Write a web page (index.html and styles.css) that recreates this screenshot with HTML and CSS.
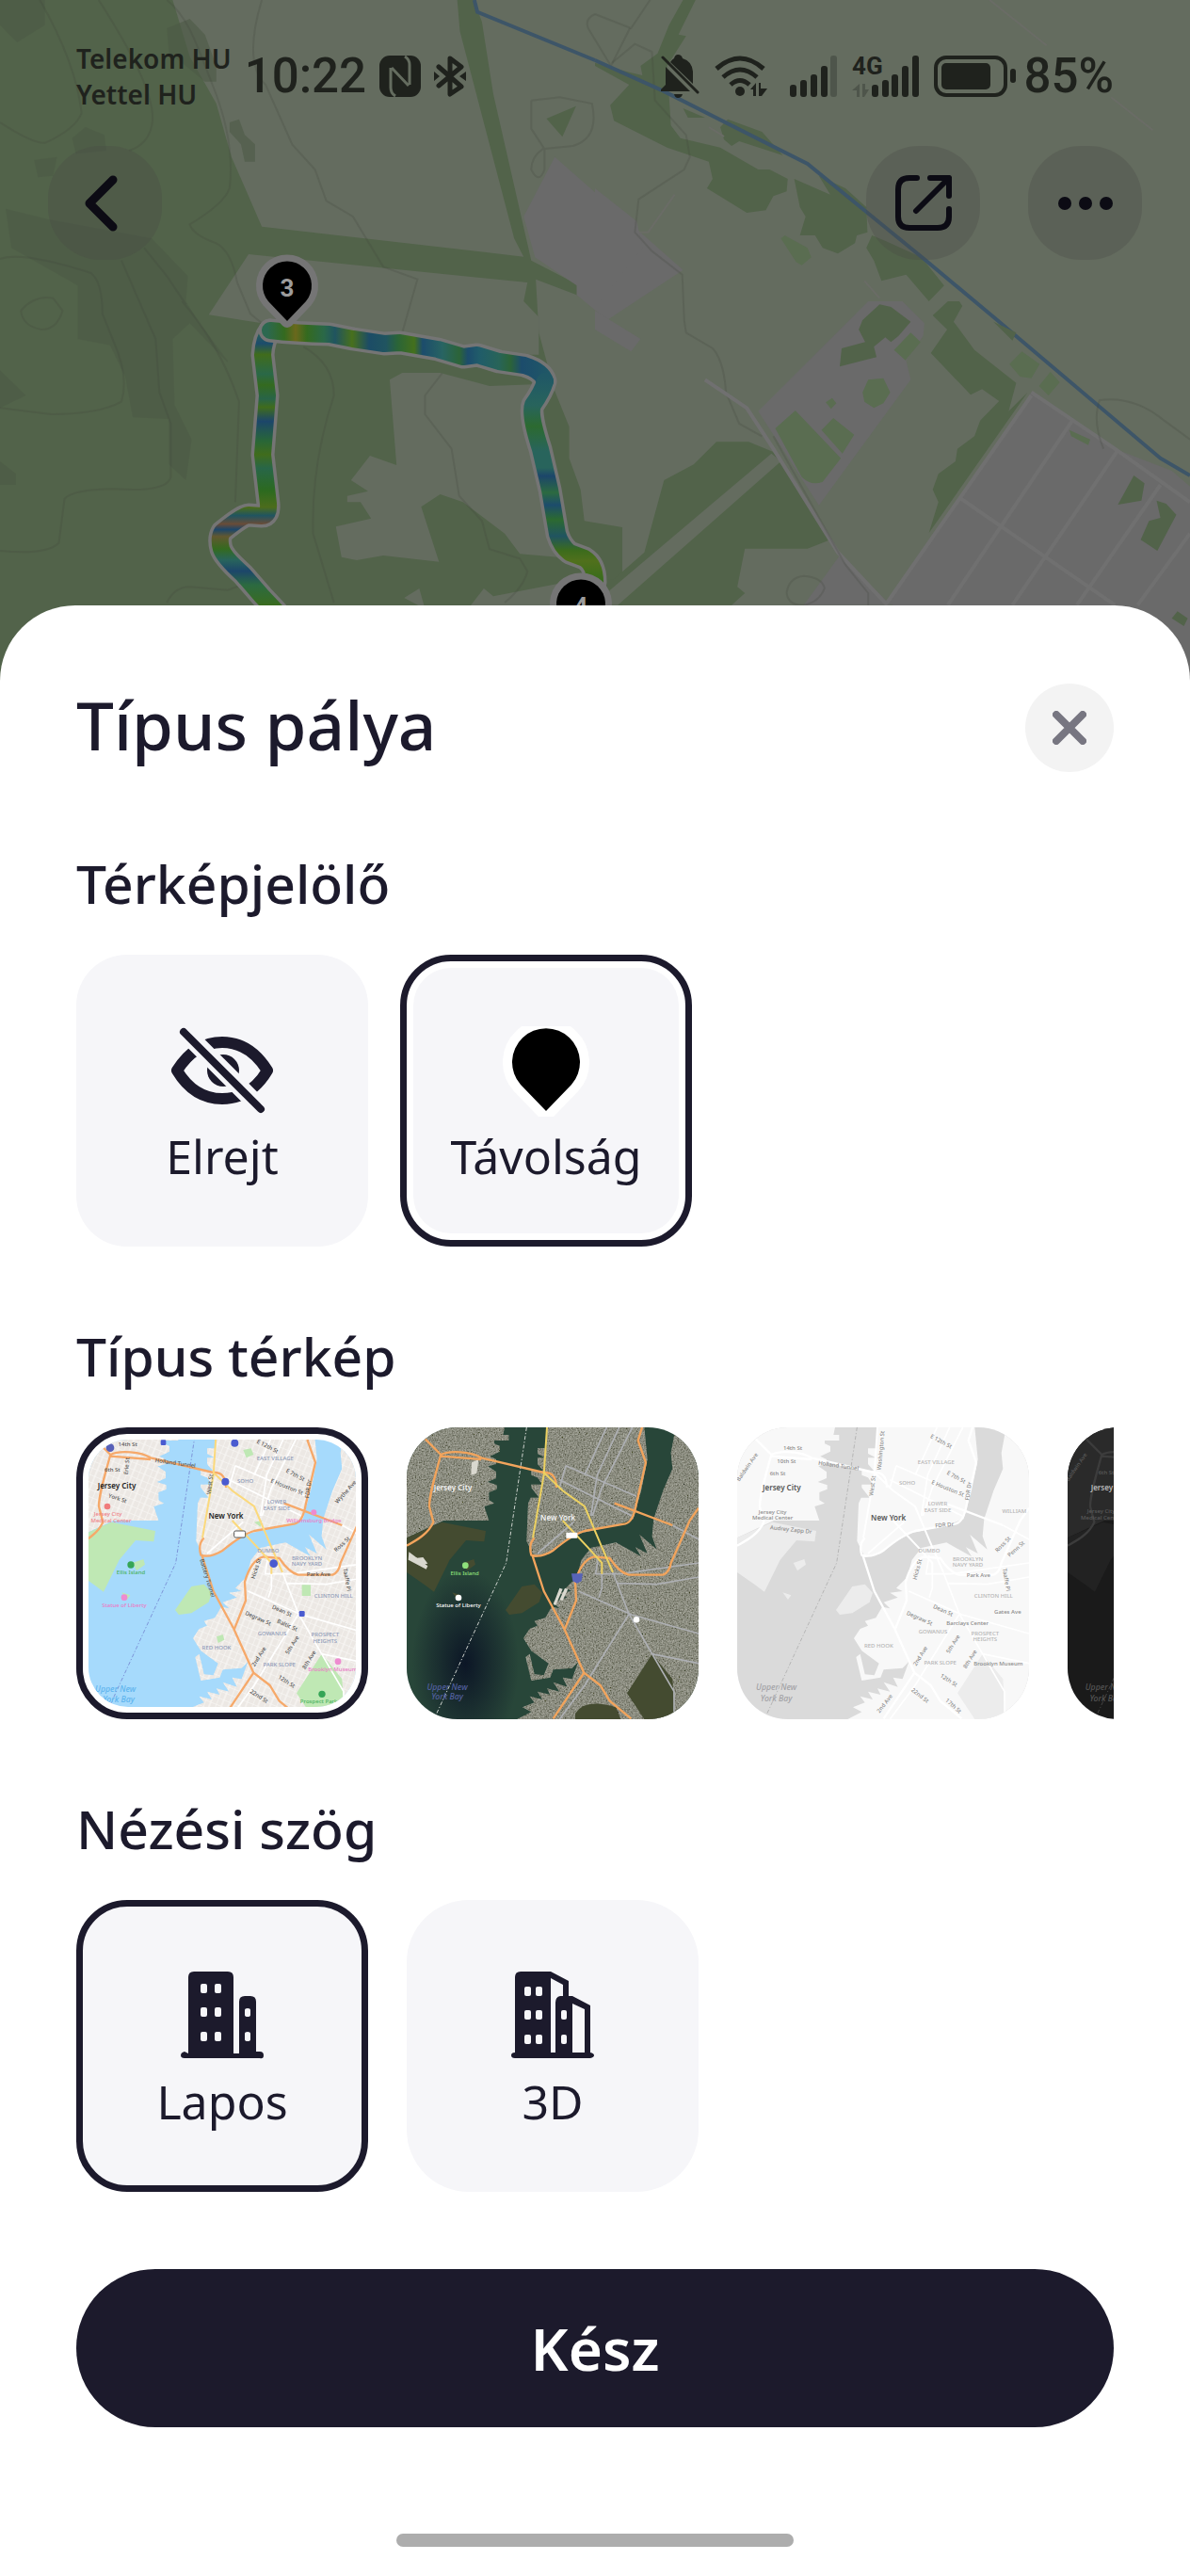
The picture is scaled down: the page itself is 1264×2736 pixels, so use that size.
FILE: index.html
```html
<!DOCTYPE html>
<html lang="hu">
<head>
<meta charset="utf-8">
<meta name="viewport" content="width=device-width, initial-scale=1">
<title>Típus pálya</title>
<link rel="stylesheet" href="styles.css">
</head>
<body>
<div class="screen">
  <svg class="terrain" viewBox="0 0 1264 740" preserveAspectRatio="xMidYMin slice" aria-hidden="true">
    <defs>
      <linearGradient id="routeNorth" gradientUnits="userSpaceOnUse" x1="284" y1="0" x2="584" y2="0">
        <stop offset="0" stop-color="#2c6850"/><stop offset=".06" stop-color="#346a1f"/><stop offset=".1" stop-color="#6a681c"/><stop offset=".14" stop-color="#346a1f"/><stop offset=".2" stop-color="#2a6848"/><stop offset=".24" stop-color="#205460"/><stop offset=".3" stop-color="#48701c"/><stop offset=".36" stop-color="#1c4c66"/><stop offset=".42" stop-color="#205460"/><stop offset=".46" stop-color="#2a6438"/><stop offset=".52" stop-color="#44701c"/><stop offset=".55" stop-color="#1c4c6c"/><stop offset=".62" stop-color="#286462"/><stop offset=".68" stop-color="#2c6438"/><stop offset=".71" stop-color="#1c4c6c"/><stop offset=".75" stop-color="#205c6a"/><stop offset=".82" stop-color="#286458"/><stop offset=".86" stop-color="#2c6438"/><stop offset=".9" stop-color="#1c4c6c"/><stop offset="1" stop-color="#205866"/>
      </linearGradient>
      <linearGradient id="routeEast" gradientUnits="userSpaceOnUse" x1="0" y1="400" x2="0" y2="620">
        <stop offset="0" stop-color="#205866"/><stop offset=".14" stop-color="#28645c"/><stop offset=".24" stop-color="#2c6a30"/><stop offset=".36" stop-color="#28645c"/><stop offset=".44" stop-color="#28645c"/><stop offset=".48" stop-color="#1c466a"/><stop offset=".56" stop-color="#2c6a40"/><stop offset=".62" stop-color="#1c4c6c"/><stop offset=".69" stop-color="#2c6a30"/><stop offset=".77" stop-color="#205460"/><stop offset=".84" stop-color="#3c6c1c"/><stop offset=".89" stop-color="#50701c"/><stop offset="1" stop-color="#346c1c"/>
      </linearGradient>
      <linearGradient id="routeWest" gradientUnits="userSpaceOnUse" x1="0" y1="350" x2="0" y2="645">
        <stop offset="0" stop-color="#2c6850"/><stop offset=".05" stop-color="#1c4c6c"/><stop offset=".09" stop-color="#406c1c"/><stop offset=".16" stop-color="#2a6848"/><stop offset=".2" stop-color="#346a1f"/><stop offset=".25" stop-color="#286448"/><stop offset=".28" stop-color="#406c1c"/><stop offset=".33" stop-color="#1c466a"/><stop offset=".4" stop-color="#286638"/><stop offset=".45" stop-color="#406c1c"/><stop offset=".5" stop-color="#286648"/><stop offset=".58" stop-color="#2c6a1f"/><stop offset=".64" stop-color="#4c6c1c"/><stop offset=".67" stop-color="#205460"/><stop offset=".7" stop-color="#684c38"/><stop offset=".72" stop-color="#1c466a"/><stop offset=".745" stop-color="#625830"/><stop offset=".79" stop-color="#346a1f"/><stop offset=".83" stop-color="#28645c"/><stop offset=".87" stop-color="#1c466a"/><stop offset=".92" stop-color="#2c6a40"/><stop offset="1" stop-color="#3c6c1c"/>
      </linearGradient>
    </defs>
    <rect width="1264" height="740" fill="#646c5f"/>

    <g transform="scale(.40306 .33333)">
      <path class="forest" d="M0 0H455L500 180L570 330L610 500L690 722L1380 818L1355 760L1212 100L1205 0H1248L1270 70L1300 300L1400 830L1520 905V940L1412 890L1420 1060L1460 1240L1500 1360L1500 1460L1530 1560L1540 1660L1640 1680L1640 2260H0Z"/>
      <path class="field" d="M655 810L1390 900L1380 960L1420 1010V1130L1230 1130L690 1030L550 1003Z"/>
      <path class="field" d="M1027 1210L1060 1188H1160L1290 1230L1405 1225L1390 1360L1470 1775L1370 1765L1330 1700L1220 1600L1160 1575L1110 1615L1157 1790L1010 1770L940 1785L900 1775L885 1678L978 1652L950 1600H915V1580L970 1565L925 1530L975 1452L1045 1482Z"/>
      <path class="field" d="M1240 1930L1275 1875L1300 1900L1470 1860V1940ZM1065 1905L1105 1875L1120 1940Z"/>
      <path class="town" d="M1462 500L1800 860L1600 1020L1520 940V910L1410 820L1380 690Z"/>
      <path class="forest" d="M1440 378L1518 338L1482 436Z"/>
      <path class="shade" d="M0 0H118V80L45 135L0 80ZM440 90L500 60L540 110L570 210V260H540L480 200L445 170ZM605 390L630 380L645 430L672 460V515H645L635 460L605 420ZM190 440L225 405L275 430L280 480L200 490ZM90 510L150 500L140 560L100 565ZM15 665L130 700L400 760L495 880L490 960L520 1020L600 1150V1155L500 1030L455 1080L460 1290L505 1400L490 1530L445 1480V1335L350 1330L330 1200L290 1100L205 1080V910L30 790ZM0 1180L68 1260L0 1300ZM0 1470L42 1510V1545H0Z"/>
      <path class="contour" d="M0 390Q90 460 120 455Q200 410 215 360Q200 200 105 0M260 0Q420 300 400 400Q390 460 340 480M440 0C500 60 520 150 560 270Q620 450 605 600Q590 650 500 715Q510 750 570 775Q610 800 625 900L660 1000L690 1030M690 0Q640 200 700 270L770 460L830 540L860 640L930 690L1010 850L1100 890L1060 1060M0 825Q60 800 240 870Q270 900 270 1000L300 1090Q340 1200 320 1280Q260 1320 135 1320L0 1300M320 830L410 1080L420 1250L450 1350V1520Q440 1570 300 1558Q190 1560 170 1590L155 1730Q120 1770 0 1755M480 960Q580 1100 630 1280L620 1600M55 990Q90 940 140 950L165 990Q150 1050 110 1050Q60 1040 55 990M380 790L440 880L490 970M800 1105Q880 1160 880 1260Q820 1480 825 1700L880 1920M1165 1190L1120 1260V1320L1190 1430L1210 1580L1270 1660L1290 1750L1370 1780L1390 1820Q1380 1870 1330 1920M440 1920Q460 1870 500 1870L600 1880L635 1865M1400 320L1475 310L1560 330Q1580 440 1510 465L1430 475Q1400 500 1400 540Q1420 590 1435 540V475L1400 410V320M1568 45Q1540 60 1550 90L1610 210L1660 90"/>
      <path class="river" d="M1250 0L1258 38L1568 192"/>
    </g>

    <g transform="translate(632) scale(.40306 .33333)">
      <path class="forest" d="M232 0H265L220 110L240 115L190 210L200 400L225 440L330 470L430 540L460 540L508 570L505 610L470 625L450 670L400 678L295 600L310 570L300 515L190 470L50 385L40 335L90 270L0 210V200L90 230L125 240L120 210L165 170L195 80Z"/>
      <path class="forest" d="M232 345L290 375H245ZM330 405L350 380L440 420L495 495L380 450L360 465L340 445ZM525 570L620 620L590 560L660 600L715 660L718 740L690 750L685 775L640 808L600 790L580 750L540 750L555 690L540 660ZM730 750L770 770L860 820L920 910L880 960L820 875L755 895L735 830L715 790Z"/>
      <path class="park" d="M490 760L500 750L560 790L570 820L545 845L530 835Z"/>
      <path class="road-soft" d="M110 740L140 740L210 620M300 405L340 435M1040 0L1190 145M710 895L750 950M1360 310L1470 415"/>
      <path class="town" d="M0 600L110 705L125 790L0 980Z"/>
      <path class="contour" d="M0 45L95 90L145 0M45 200L105 140L150 165L158 320L240 430L250 500L235 540L115 635L105 740L150 800L230 875L235 1020L240 1060L310 1110Q340 1150 345 1250L380 1350L440 1390"/>
      <path class="river" d="M0 192L180 290L560 522L715 675L870 828L1060 1020L1490 1460L1568 1515"/>
    </g>

    <g transform="translate(632 320) scale(.40306 .33333)">
      <path class="town" d="M0 30L120 120L95 160L0 90ZM720 0L810 0L868 70L865 110L820 190L832 250L590 650L430 350ZM1150 290L1370 470L1520 540L1568 590V1300H1350L770 960ZM645 810L780 968H550Z"/>
      <path class="forest" d="M320 448H405L470 480L620 760L560 788H395L375 910L395 930L360 968H0V890L50 885L130 800L182 570L260 520Z"/>
      <path class="field" d="M465 485L490 510L60 968H30V930Z"/>
      <path class="park" d="M475 405L528 348L648 500L600 575Q570 590 545 560ZM597 410L628 372L683 425L652 485ZM608 322L625 308L636 325L622 343ZM705 290L720 250L760 245L778 290L760 325L735 340L710 320ZM788 155L832 100L858 130L818 188Z"/>
      <path class="forest" d="M705 60L750 10L780 18L832 65L800 110L780 130L765 115L735 145L742 178L645 208L650 150L712 130L695 90ZM890 45L930 0H960L968 15L945 65L1000 155L1110 260L1090 350L1140 290L880 738L905 640L890 600L905 550L950 510L955 470L1000 430L1015 380L1065 318L1020 280L990 298L885 165L928 90ZM1420 555L1448 580L1440 635L1378 648ZM1480 635L1505 645L1532 680L1482 795L1438 760L1460 700L1490 690ZM1535 988L1562 1010L1552 1035L1520 1010ZM1050 65L1110 100L1100 125Z"/>
      <path class="park" d="M1092 200L1125 160L1172 200L1150 245L1120 240ZM1170 270L1200 225L1225 258L1195 300ZM1250 410L1305 440L1300 458L1255 430Z"/>
      <path class="street" d="M1150 290L1370 470L1568 640M1258 380L930 968M1375 480L1100 968M1490 585L1270 968M1568 740L1430 968M960 625L1370 968M1150 300L770 960"/>
      <path class="street" d="M290 250L400 340L470 470L640 800L770 968"/>
      <path class="contour" d="M470 430L660 840L720 930V968M505 930Q510 880 550 875Q600 880 605 915Q590 960 550 968Q510 970 505 930M1340 470Q1310 380 1330 315Q1420 300 1500 380L1568 440"/>
    </g>

    <g fill="none" stroke-linecap="round" stroke-linejoin="round">
      <path stroke="#757575" stroke-width="25" d="M287 351Q280 360 279 377L284 420L279 483L285 535Q286 548 278 548L264 547Q258 547 236 565Q232 572 235 583Q238 592 258 610L278 633L294 650"/>
      <path stroke="url(#routeWest)" stroke-width="18" d="M287 351Q280 360 279 377L284 420L279 483L285 535Q286 548 278 548L264 547Q258 547 236 565Q232 572 235 583Q238 592 258 610L278 633L294 650"/>
      <path stroke="#757575" stroke-width="25" d="M287 351Q313 354 350 355L375 360L408 365L425 364L465 371L492 379L507 377L530 384L557 388Q576 394 579 405Q576 416 566 430Q562 440 574 477L584 520L592 567Q596 580 605 587L621 593Q632 600 632 618"/>
      <path stroke="url(#routeNorth)" stroke-width="18" d="M287 351Q313 354 350 355L375 360L408 365L425 364L465 371L492 379L507 377L530 384L557 388Q576 394 579 405"/>
      <path stroke="url(#routeEast)" stroke-width="18" d="M579 405Q576 416 566 430Q562 440 574 477L584 520L592 567Q596 580 605 587L621 593Q632 600 632 618"/>
    </g>
    <g class="pin">
      <path d="M305 341L285 320A26 26 0 1 1 325 320Z"/>
      <text x="305" y="315">3</text>
      <path d="M617 679L597 658A26 26 0 1 1 637 658Z"/>
      <text x="617" y="653">4</text>
    </g>
  </svg>

  <header class="status">
    <div class="status-left">
      <div class="carriers"><span>Telekom HU</span><span>Yettel HU</span></div>
      <span class="clock">10:22</span>
      <svg class="icon" width="44" height="44" viewBox="0 0 44 44" role="img" aria-label="NFC"><rect width="44" height="44" rx="11"/><path d="M12 13V34Q12 40 17 43M32 31V10Q32 4 27 1M13 13L31 32" fill="none" stroke="#646c5f" stroke-width="3" stroke-linejoin="round"/></svg>
      <svg class="icon line" width="34" height="44" viewBox="0 0 34 44" role="img" aria-label="Bluetooth"><path d="M5 12L29 33L17 41V3L29 12L5 32" stroke-width="5"/><path d="M0 17L6 22L0 27ZM34 17L27 22L34 27Z" fill="#1f221d" stroke="none"/></svg>
    </div>
    <div class="status-right">
      <svg class="icon" width="41" height="46" viewBox="0 0 41 46" role="img" aria-label="Némítva"><path d="M10 8L34 31V18Q33 7 23 4Q22 0 18 0Q15 0 14 4Q12 5 10 8ZM5 13V32L0 37V39H31ZM14 42H23Q22 46 18 46Q15 46 14 42Z"/><path d="M2 3L39 40" fill="none" stroke="#1f221d" stroke-width="3" stroke-linecap="round"/></svg>
      <svg class="icon" width="64" height="44" viewBox="0 0 64 44" role="img" aria-label="Wi-Fi"><path d="M2 14Q27-8 52 14M9 23Q27 7 45 23M17 31Q27 22 37 31" fill="none" stroke="#1f221d" stroke-width="5"/><circle cx="27" cy="38" r="5"/><path d="M44 29V43H41V36H38ZM47 43V29H49V35H56L50 43Z"/></svg>
      <svg class="icon" width="50" height="44" viewBox="0 0 50 44" role="img" aria-label="Jelerősség"><rect y="31" width="7" height="13" rx="3"/><rect x="11" y="26" width="7" height="18" rx="3"/><rect x="22" y="20" width="7" height="24" rx="3"/><rect x="33" y="11" width="7" height="33" rx="3"/><rect x="43" width="7" height="44" rx="3" opacity=".3"/></svg>
      <svg class="icon" width="71" height="54" viewBox="0 -5 71 54" role="img" aria-label="4G jelerősség"><text class="network" x="0" y="20">4G</text><path opacity=".3" d="M8 30V44H5V37H0ZM11 44V30H14V36H18L13 44Z"/><rect x="21" y="31" width="7" height="13" rx="3"/><rect x="32" y="26" width="7" height="18" rx="3"/><rect x="42" y="20" width="7" height="24" rx="3"/><rect x="53" y="11" width="7" height="33" rx="3"/><rect x="64" width="7" height="44" rx="3"/></svg>
      <span class="battery">
        <svg class="icon" width="87" height="44" viewBox="0 0 87 44" aria-hidden="true"><rect x="2" y="2" width="74" height="40" rx="11" fill="none" stroke="#1f221d" stroke-width="4"/><rect x="8" y="8" width="52" height="28" rx="5"/><rect x="81" y="14" width="6" height="15" rx="3"/></svg>
        <span>85%</span>
      </span>
    </div>
  </header>

  <nav class="toolbar" aria-label="Útvonal">
    <button class="tool" type="button" aria-label="Vissza"><svg width="60" height="60" viewBox="0 0 60 60"><path d="M38 5L13 30L38 55" stroke-width="9"/></svg></button>
    <div class="tool-group">
      <button class="tool" type="button" aria-label="Megosztás"><svg width="60" height="60" viewBox="0 0 60 60"><path stroke-width="6" d="M23 3H15Q3 3 3 15V44Q3 56 15 56H45Q57 56 57 44V36M37 3H57V22M57 3L22 38"/></svg></button>
      <button class="tool" type="button" aria-label="Több"><svg width="60" height="60" viewBox="0 0 60 60"><g fill="#0c0b14" stroke="none"><circle cx="8" cy="30" r="7"/><circle cx="30" cy="30" r="7"/><circle cx="52" cy="30" r="7"/></g></svg></button>
    </div>
  </nav>

  <main class="sheet">
    <div class="sheet-head">
      <h1>Típus pálya</h1>
      <button class="close" type="button" aria-label="Bezárás"><svg width="36" height="36" viewBox="0 0 36 36"><path d="M4 4L32 32M32 4L4 32"/></svg></button>
    </div>

    <fieldset class="group">
      <legend>Térképjelölő</legend>
      <div class="tiles close-set">
        <label class="tile"><input type="radio" name="marker">
          <svg width="112" height="96" viewBox="0 0 112 96"><defs><mask id="slash"><rect width="112" height="96" fill="#fff"/><path d="M-4-14L118 108" stroke="#000" stroke-width="19"/></mask></defs><g mask="url(#slash)"><path d="M8 47Q27 17 56 17T104 47Q86 77 56 77T8 47Z" fill="none" stroke="#1c1a2c" stroke-width="12" stroke-linejoin="round"/><circle cx="57" cy="47" r="17" fill="#1c1a2c"/></g><path d="M15 6L97 88" stroke="#1c1a2c" stroke-width="8" stroke-linecap="round"/></svg>
          <span>Elrejt</span></label>
        <label class="tile ringed"><input type="radio" name="marker" checked>
          <svg width="112" height="96" viewBox="0 0 112 96"><path d="M56 90L29 62A36 36 0 1 1 83 62Z" stroke="#fff" stroke-width="20" stroke-linejoin="round" paint-order="stroke"/></svg>
          <span>Távolság</span></label>
      </div>
    </fieldset>

    <fieldset class="group">
      <legend>Típus térkép</legend>
      <div class="tiles strip">
        <label class="tile ringed photo"><input type="radio" name="map" aria-label="Normál" checked>
          <svg class="harbor streets" viewBox="72 87 852 852">
            <defs>
              <pattern id="blocks" width="36" height="22" patternUnits="userSpaceOnUse" patternTransform="rotate(22)"><path class="grid" d="M0 0H36M0 0V22M18 0V22"/></pattern>
              <path id="shore" d="M33 48H345L340 72H358V90H312V100L330 108V125L298 140L318 150V165L292 172L318 190V210L290 222L320 232V245L295 255V280L312 290L280 300L295 345L150 345L33 400ZM480 48H790L800 150L780 250L755 340L700 360L590 385L540 410L490 450L440 462L415 410L420 290L428 272H455L430 240V230H465L450 208L430 200V186H468L450 165V145H475L450 132V115H478ZM890 48H963V978H385L430 955L402 940L440 925L425 905L465 915L450 890L490 900L480 880L520 890L500 860L545 875L530 845L560 850L580 795L560 815L500 820L490 845L430 855L412 780L425 770L440 835L470 838L485 800L430 760L405 720L425 690L450 680L440 665L475 655L495 620L520 625L500 605L545 590L520 575L560 570L540 560L575 525L590 470L620 432L700 415L780 460L762 430L800 450L775 390L830 437L815 395L820 340L850 250L880 180L875 130Z"/>
              <clipPath id="ground"><use href="#shore"/></clipPath>
              <path id="parks" d="M33 400L145 350L285 378L280 412L222 408L170 470L120 572L90 550L33 510ZM348 630L400 555L440 548L465 575L455 605L400 640L360 645ZM212 480L247 468L252 485L225 505ZM178 574L205 583L195 597ZM735 895L815 770L880 850L888 978H790Z"/>
              <g id="roads">
                <path class="lane" d="M415 48L350 480L120 978"/>
                <path class="avenue" d="M670 48L600 200M710 48L640 200L620 330M752 48L655 240L625 330M540 170L765 268M520 215L750 330M540 170L520 240M645 455L635 515H715L963 480M655 515V560L645 590M580 570L750 645L963 705M690 510L740 640L815 770L885 890V978M740 645L600 870L520 978M815 770L963 800M705 545L830 548L963 525M565 350L450 450M880 360L963 405"/>
                <path class="highway" d="M92 85L142 135C115 230 105 270 105 300L118 350C100 390 60 410 33 425M142 135C170 120 240 125 270 145L470 192Q510 190 510 240M142 140L270 150M783 48L770 90L795 160L765 290Q755 350 730 355L600 378Q560 390 500 440Q460 465 430 455Q420 420 440 400M433 455L470 570L535 690L598 830L500 976M598 830L650 870L680 920L748 976M535 695L573 600L570 540Q590 470 630 460L680 465Q710 510 740 518H850Q870 510 875 480L935 345L963 305M695 290L880 360"/>
                <path class="arterial" d="M480 48L470 200L435 400M470 192L530 250L600 300L655 430L690 510M530 345L610 430L655 480V515"/>
              </g>
            </defs>
            <rect class="water" x="33" y="48" width="930" height="930"/>
            <use class="land" href="#shore"/>
            <use href="#shore" fill="url(#blocks)"/>
            <use class="green" href="#parks"/>
            <path class="green" d="M752 550H780V585H752ZM565 120L590 115L598 135L575 145ZM480 715L500 708L505 725L485 735ZM600 350L625 345L620 365Z"/>
            <use href="#roads"/>
            <g><circle cx="132" cy="300" r="10" fill="#f07c7c"/><circle cx="207" cy="486" r="11" fill="#35a556"/><circle cx="186" cy="590" r="10" fill="#ee8bd0"/><circle cx="790" cy="319" r="9" fill="#ee8bd0"/><circle cx="508" cy="221" r="12" fill="#4a5bd0"/><circle cx="538" cy="98" r="12" fill="#4a5bd0"/><circle cx="662" cy="482" r="13" fill="#4a5bd0"/><circle cx="141" cy="113" r="13" fill="#5860b8"/><rect x="302" y="88" width="17" height="17" rx="4" fill="#4a5bd0"/><rect x="743" y="633" width="18" height="18" rx="4" fill="#4a5bd0"/><circle cx="867" cy="794" r="10" fill="#ee8bd0"/><circle cx="816" cy="898" r="11" fill="#35a556"/><rect x="536" y="378" width="36" height="21" rx="5" fill="#fff" stroke="#555" stroke-width="3"/></g>
            <g class="labels">
              <text class="city" x="162" y="242">Jersey City</text><text class="city" x="510" y="340">New York</text>
              <text class="rose" x="134" y="330">Jersey City</text><text class="rose" x="144" y="350">Medical Center</text>
              <text class="leaf" x="207" y="517">Ellis Island</text><text class="pink" x="186" y="621">Statue of Liberty</text><text class="pink" x="790" y="350">Williamsburg Bridge</text>
              <text class="area" x="667" y="152">EAST VILLAGE</text><text class="area" x="572" y="224">SOHO</text><text class="area" x="672" y="292">LOWER</text><text class="area" x="672" y="311">EAST SIDE</text><text class="area" x="645" y="447">DUMBO</text><text class="area" x="768" y="471">BROOKLYN</text><text class="area" x="768" y="490">NAVY YARD</text><text class="area" x="853" y="592">CLINTON HILL</text><text class="area" x="657" y="710">GOWANUS</text><text class="area" x="826" y="715">PROSPECT</text><text class="area" x="826" y="734">HEIGHTS</text><text class="area" x="480" y="755">RED HOOK</text><text class="area" x="680" y="810">PARK SLOPE</text>
              <text class="way" x="197" y="108">14th St</text><text class="way" x="148" y="190">6th St</text><text class="way" x="200" y="172" transform="rotate(-85 200 172)">Erie St</text><text class="way" x="163" y="280" transform="rotate(18 163 280)">York St</text><text class="way" x="348" y="168" transform="rotate(8 348 168)">Holland Tunnel</text><text class="way" x="702" y="243" transform="rotate(22 702 243)">E Houston St</text><text class="way" x="728" y="205" transform="rotate(28 728 205)">E 7th St</text><text class="way" x="640" y="114" transform="rotate(28 640 114)">E 12th St</text><text class="way" x="778" y="245" transform="rotate(-82 778 245)">FDR Dr</text><text class="way" x="465" y="230" transform="rotate(-83 465 230)">West St</text><text class="way" x="805" y="523">Park Ave</text><text class="way" x="445" y="530" transform="rotate(73 445 530)">Battery Tunnel</text><text class="way" x="612" y="500" transform="rotate(-72 612 500)">Hicks St</text><text class="way" x="890" y="535" transform="rotate(80 890 535)">Taaffe Pl</text><text class="way" x="884" y="425" transform="rotate(-42 884 425)">Ross St</text><text class="way" x="610" y="662" transform="rotate(24 610 662)">Degraw St</text><text class="way" x="686" y="638" transform="rotate(24 686 638)">Dean St</text><text class="way" x="703" y="684" transform="rotate(24 703 684)">Baltic St</text><text class="way" x="726" y="745" transform="rotate(-58 726 745)">5th Ave</text><text class="way" x="780" y="792" transform="rotate(-58 780 792)">8th Ave</text><text class="way" x="620" y="782" transform="rotate(-58 620 782)">2nd Ave</text><text class="way" x="700" y="863" transform="rotate(33 700 863)">12th St</text><text class="way" x="612" y="910" transform="rotate(33 612 910)">22nd St</text><text class="way" x="896" y="258" transform="rotate(-48 896 258)">Wythe Ave</text>
              <text class="pink" x="850" y="824">Brooklyn Museum</text><text class="bay" x="158" y="892">Upper New</text><text class="bay" x="168" y="924">York Bay</text><text class="leaf" x="806" y="926">Prospect Park</text>
            </g>
          </svg>
        </label>
        <label class="tile photo"><input type="radio" name="map" aria-label="Műhold">
          <svg class="harbor satellite" viewBox="33 48 930 930">
            <defs>
              <filter id="roofs" x="0" y="0" width="100%" height="100%"><feTurbulence type="fractalNoise" baseFrequency=".22" numOctaves="4" seed="4"/><feColorMatrix values=".9 .3 0 0 -.21  .9 .3 0 0 -.2  .85 .3 0 0 -.24  0 0 0 0 1"/></filter>
              <radialGradient id="deep"><stop offset="0" stop-color="#0c1626"/><stop offset="1" stop-color="#0c1626" stop-opacity="0"/></radialGradient>
            </defs>
            <rect class="water" x="33" y="48" width="930" height="930"/>
            <ellipse cx="220" cy="800" rx="170" ry="300" fill="url(#deep)"/>
            <g clip-path="url(#ground)"><rect x="33" y="48" width="930" height="930" filter="url(#roofs)"/><rect x="33" y="48" width="930" height="930" fill="#55564b" opacity=".35"/></g>
            <use class="green" href="#parks"/>
            <path class="green" d="M570 960Q600 910 700 940L715 978H570Z"/>
            <path fill="#d9d8cf" d="M40 445L100 490L95 500L38 470ZM60 465L85 462L100 482L80 485ZM240 160L262 150L256 195L238 200ZM520 560L530 563L508 615L500 612ZM537 560L547 563L530 600L520 598Z"/>
            <use href="#roads"/>
            <circle cx="220" cy="488" r="10" fill="#8fe07c"/><circle cx="198" cy="591" r="10" fill="#fff"/><circle cx="765" cy="661" r="10" fill="#fff"/><path d="M558 514H594L590 538L576 545L562 538Z" fill="#5763b8"/><rect x="541" y="383" width="36" height="18" rx="3" fill="#fff"/>
            <g class="labels">
              <text class="city" x="180" y="249">Jersey City</text><text class="city" x="515" y="346">New York</text><text class="leaf" x="218" y="519">Ellis Island</text><text class="white" x="198" y="620">Statue of Liberty</text><text class="bay" x="162" y="885">Upper New</text><text class="bay" x="162" y="915">York Bay</text>
            </g>
          </svg>
        </label>
        <label class="tile photo"><input type="radio" name="map" aria-label="Világos">
          <svg class="harbor light" viewBox="33 48 930 930">
            <rect class="water" x="33" y="48" width="930" height="930"/>
            <use class="land" href="#shore"/>
            <use class="green" href="#parks"/>
            <use href="#roads"/>
            <g class="labels">
              <text class="city" x="175" y="249">Jersey City</text><text class="city" x="515" y="346">New York</text>
              <text class="way" x="146" y="323">Jersey City</text><text class="way" x="146" y="342">Medical Center</text><text class="way" x="210" y="119">14th St</text><text class="way" x="190" y="163">10th St</text><text class="way" x="162" y="200">6th St</text><text class="way" x="70" y="178" transform="rotate(-55 70 178)">Baldwin Ave</text><text class="way" x="355" y="176" transform="rotate(8 355 176)">Holland Tunnel</text><text class="way" x="204" y="380" transform="rotate(6 204 380)">Audrey Zapp Dr</text>
              <text class="way" x="497" y="122" transform="rotate(-85 497 122)">Washington St</text><text class="way" x="470" y="235" transform="rotate(-83 470 235)">West St</text><text class="way" x="680" y="98" transform="rotate(28 680 98)">E 12th St</text><text class="way" x="728" y="212" transform="rotate(28 728 212)">E 7th St</text><text class="way" x="702" y="248" transform="rotate(22 702 248)">E Houston St</text><text class="way" x="776" y="252" transform="rotate(-82 776 252)">FDR Dr</text><text class="way" x="694" y="365" transform="rotate(-5 694 365)">FDR Dr</text>
              <text class="area" x="667" y="164">EAST VILLAGE</text><text class="area" x="575" y="232">SOHO</text><text class="area" x="672" y="298">LOWER</text><text class="area" x="672" y="317">EAST SIDE</text><text class="area" x="645" y="448">DUMBO</text><text class="area" x="768" y="473">BROOKLYN</text><text class="area" x="768" y="491">NAVY YARD</text><text class="area" x="850" y="591">CLINTON HILL</text><text class="area" x="657" y="706">GOWANUS</text><text class="area" x="823" y="711">PROSPECT</text><text class="area" x="823" y="729">HEIGHTS</text><text class="area" x="484" y="750">RED HOOK</text><text class="area" x="680" y="805">PARK SLOPE</text><text class="area" x="916" y="322">WILLIAM</text>
              <text class="way" x="802" y="525">Park Ave</text><text class="way" x="895" y="641">Gates Ave</text><text class="way" x="767" y="679">Barclays Center</text><text class="way" x="865" y="807">Brooklyn Museum</text><text class="way" x="613" y="502" transform="rotate(-75 613 502)">Hicks St</text><text class="way" x="885" y="535" transform="rotate(80 885 535)">Taaffe Pl</text><text class="way" x="612" y="662" transform="rotate(24 612 662)">Degraw St</text><text class="way" x="687" y="637" transform="rotate(24 687 637)">Dean St</text><text class="way" x="726" y="742" transform="rotate(-58 726 742)">5th Ave</text><text class="way" x="780" y="790" transform="rotate(-58 780 790)">8th Ave</text><text class="way" x="622" y="780" transform="rotate(-58 622 780)">2nd Ave</text><text class="way" x="508" y="932" transform="rotate(-52 508 932)">2nd Ave</text><text class="way" x="704" y="859" transform="rotate(33 704 859)">12th St</text><text class="way" x="612" y="907" transform="rotate(38 612 907)">22nd St</text><text class="way" x="718" y="940" transform="rotate(42 718 940)">17th St</text><text class="way" x="884" y="425" transform="rotate(-45 884 425)">Ross St</text><text class="way" x="926" y="440" transform="rotate(-42 926 440)">Penn St</text>
              <text class="bay" x="158" y="886">Upper New</text><text class="bay" x="158" y="920">York Bay</text>
            </g>
          </svg>
        </label>
        <label class="tile photo"><input type="radio" name="map" aria-label="Sötét">
          <svg class="harbor dark" viewBox="33 48 930 930">
            <rect class="water" x="33" y="48" width="930" height="930"/>
            <use class="land" href="#shore"/>
            <use class="green" href="#parks"/>
            <use href="#roads"/>
            <g class="labels"><text class="city" x="168" y="248">Jersey City</text><text class="way" x="140" y="322">Jersey City</text><text class="way" x="140" y="342">Medical Center</text><text class="way" x="156" y="197">6th St</text><text class="way" x="66" y="178" transform="rotate(-55 66 178)">Baldwin Ave</text><text class="bay" x="154" y="886">Upper New</text><text class="bay" x="154" y="920">York Bay</text></g>
          </svg>
        </label>
      </div>
    </fieldset>

    <fieldset class="group">
      <legend>Nézési szög</legend>
      <div class="tiles">
        <label class="tile outlined"><input type="radio" name="angle" checked>
          <svg width="88" height="96" viewBox="0 0 88 96"><path fill="#1c1a2c" fill-rule="evenodd" d="M8 87V6Q8 0 14 0H50Q56 0 56 6V87H62V32Q62 26 68 26H74Q80 26 80 32V85H84Q88 85 88 89T84 92H4Q0 92 0 89T4 85ZM21 15V21Q21 23 23 23H26Q28 23 28 21V15Q28 13 26 13H23Q21 13 21 15ZM36 15V21Q36 23 38 23H41Q43 23 43 21V15Q43 13 41 13H38Q36 13 36 15ZM21 40V46Q21 48 23 48H26Q28 48 28 46V40Q28 38 26 38H23Q21 38 21 40ZM36 40V46Q36 48 38 48H41Q43 48 43 46V40Q43 38 41 38H38Q36 38 36 40ZM21 66V72Q21 74 23 74H26Q28 74 28 72V66Q28 64 26 64H23Q21 64 21 66ZM36 66V72Q36 74 38 74H41Q43 74 43 72V66Q43 64 41 64H38Q36 64 36 66ZM68 41V46Q68 48 71 48T74 46V41Q74 39 71 39T68 41ZM68 66V72Q68 74 71 74T74 72V66Q74 64 71 64T68 66Z"/></svg>
          <span>Lapos</span></label>
        <label class="tile round"><input type="radio" name="angle">
          <svg width="88" height="96" viewBox="0 0 88 96"><path fill="#1c1a2c" d="M4 86V6Q4 0 10 0H42L61 10V26H65L84 36V86Q88 87 88 89T84 92H4Q0 92 0 89T4 86Z"/><path fill="#f6f6f9" d="M42 7L55 14V26H52Q47 27 47 33V86H42ZM65 34L78 40V86H65Z"/><g fill="#f6f6f9"><rect x="14" y="16" width="7" height="10" rx="2"/><rect x="26" y="16" width="7" height="10" rx="2"/><rect x="14" y="41" width="7" height="10" rx="2"/><rect x="26" y="41" width="7" height="10" rx="2"/><rect x="14" y="67" width="7" height="10" rx="2"/><rect x="26" y="67" width="7" height="10" rx="2"/><rect x="53" y="41" width="6" height="10" rx="2"/><rect x="53" y="67" width="6" height="10" rx="2"/></g></svg>
          <span>3D</span></label>
      </div>
    </fieldset>

    <button class="done" type="button">Kész</button>
    <div class="home-bar"></div>
  </main>
</div>
</body>
</html>
```
FILE: styles.css
```css
* { box-sizing: border-box; }

body {
  margin: 0;
  background: #fff;
  color: #1c1a2c;
  font-family: "Noto Sans", "Open Sans", sans-serif;
}

.screen {
  position: relative;
  display: flex;
  flex-direction: column;
  min-height: 100vh;
}

button { font: inherit; border: 0; padding: 0; }

/* Dimmed map behind the sheet */
.terrain {
  position: absolute;
  top: 0;
  left: 0;
  width: 100%;
  height: 740px;
}
.forest { fill: #52634a; }
.field { fill: #646c5f; }
.town { fill: #6a6a6a; }
.park { fill: #5a6d51; }
.shade { fill: #4c5a46; opacity: .6; }
.contour, .river, .street, .road-soft { fill: none; vector-effect: non-scaling-stroke; }
.contour { stroke: #3f463b; stroke-opacity: .22; stroke-width: 2px; }
.river { stroke: #3d5568; stroke-width: 4px; }
.street { stroke: #707070; stroke-width: 4px; }
.road-soft { stroke: #6a6c66; stroke-width: 2px; }
.pin path { fill: #000; stroke: #757575; stroke-width: 14px; paint-order: stroke; stroke-linejoin: round; }
.pin text { fill: #9c9c9c; font: 700 26px Roboto, sans-serif; text-anchor: middle; }

/* Status bar */
.status {
  position: relative;
  display: flex;
  justify-content: space-between;
  align-items: center;
  padding: 43px 81px 0;
  color: #1f221d;
  font-family: Roboto, sans-serif;
  font-weight: 500;
}
.status-left, .status-right { display: flex; align-items: center; gap: 16px; }
.status-left { gap: 14px; }
.carriers {
  display: flex;
  flex-direction: column;
  font: 600 28px/38px "Noto Sans", sans-serif;
}
.clock, .battery { font-size: 51px; line-height: 64px; }
.battery { display: flex; align-items: center; gap: 8px; }
.icon { flex: none; fill: #1f221d; }
.icon.line { fill: none; stroke: #1f221d; stroke-linejoin: round; stroke-linecap: round; }
.network { font: 700 26px/26px Roboto, sans-serif; }

/* Floating map buttons */
.toolbar {
  position: relative;
  display: flex;
  justify-content: space-between;
  padding: 36px 51px 0;
}
.tool-group { display: flex; gap: 51px; }
.tool {
  display: grid;
  place-items: center;
  width: 121px;
  height: 121px;
  border-radius: 56px;
  background: rgba(72, 72, 68, .3);
}
.tool svg { fill: none; stroke: #0c0b14; stroke-linecap: round; stroke-linejoin: round; }

/* Bottom sheet */
.sheet {
  position: relative;
  flex: 1;
  display: flex;
  flex-direction: column;
  margin-top: 367px;
  padding: 83px 81px 30px;
  border-radius: 80px 80px 0 0;
  background: #fff;
}
.sheet-head { display: flex; justify-content: space-between; align-items: flex-start; padding-bottom: 2px; }
h1 { margin: 0; font-size: 71px; font-weight: 500; line-height: 88px; }
.close {
  display: grid;
  place-items: center;
  width: 94px;
  height: 94px;
  border-radius: 50%;
  background: #f3f3f3;
}
.close svg { fill: none; stroke: #777681; stroke-width: 8px; stroke-linecap: round; }

.group { min-width: 0; margin: 84px 0 0; padding: 0; border: 0; }
legend { padding: 0; font-size: 57px; font-weight: 500; line-height: 64px; }
.tiles { display: flex; gap: 41px; padding-top: 44px; }
.close-set { gap: 34px; }
.strip { overflow: hidden; }
.tile {
  position: relative;
  flex: none;
  display: flex;
  flex-direction: column;
  align-items: center;
  gap: 10px;
  width: 310px;
  height: 310px;
  padding-top: 76px;
  border-radius: 54px;
  background: #f6f6f9;
  font-size: 50px;
  line-height: 64px;
}
.tile input { position: absolute; inset: 0; margin: 0; width: 100%; height: 100%; opacity: 0; cursor: pointer; }
.ringed { padding-top: 69px; border: 7px solid #1c1a2c; box-shadow: inset 0 0 0 7px #fff; }
.outlined { padding-top: 69px; border: 7px solid #1c1a2c; }
.round { border-radius: 66px; }
.photo { padding: 0; overflow: hidden; }
.photo.ringed { padding: 6px; background: #fff; box-shadow: none; }

.done {
  height: 168px;
  margin-top: 82px;
  border-radius: 84px;
  background: #1c1a2c;
  color: #fff;
  font-size: 62px;
  font-weight: 600;
}
.home-bar {
  align-self: center;
  width: 422px;
  height: 14px;
  margin-top: 113px;
  border-radius: 7px;
  background: #adadad;
}

/* Map previews */
.harbor { display: block; width: 100%; height: 100%; }
.ringed .harbor { border-radius: 42px; }
.harbor {
  --water: #a6dafc; --land: #ece8e4; --green: #bfe8b4; --avenue: #fff;
  --highway: #f6a96a; --arterial: #fbd97c; --lane: #7d94d8; --city: #222; --way: #555; --area: #8f9bb8; --bay: #5eb4ee;
}
.satellite {
  --water: #284639; --land: #6d6f66; --green: #444b30; --avenue: #aeb0b4;
  --highway: #f2a45c; --arterial: #ecd161; --lane: #cfd4cf; --city: #f2f2f2; --bay: #5360a0;
}
.light {
  --water: #dadada; --land: #f8f8f8; --green: #ececec; --avenue: #fff;
  --highway: #fff; --arterial: #fff; --lane: #b5b5b5; --city: #555; --way: #8a8a8a; --area: #b5b5b5; --bay: #a2a2a6;
}
.dark {
  --water: #1a1a1a; --land: #2a2a2a; --green: #222; --avenue: #383838;
  --highway: #3c3c3c; --arterial: #3c3c3c; --lane: #444; --city: #b8b8b8; --way: #5c5c5c; --area: #555; --bay: #555;
}
.water { fill: var(--water); }
.land { fill: var(--land); }
.grid { stroke: #f8f6f3; fill: none; stroke-width: 4; }
.green { fill: var(--green); }
.lane { fill: none; stroke: var(--lane); stroke-width: 3; stroke-dasharray: 12 6 4 6; }
.avenue { fill: none; stroke: var(--avenue); stroke-width: 5; }
.highway { fill: none; stroke: var(--highway); stroke-width: 7; stroke-linejoin: round; }
.arterial { fill: none; stroke: var(--arterial); stroke-width: 6; }
.labels { font: 500 18px "Noto Sans", sans-serif; text-anchor: middle; }
.city { fill: var(--city); font-size: 24px; font-weight: 600; }
.way { fill: var(--way); }
.area { fill: var(--area); }
.bay { fill: var(--bay); font-size: 26px; font-style: italic; }
.rose { fill: #ee7f86; }
.pink { fill: #e87cc6; }
.leaf { fill: #4bb260; }
.satellite .leaf { fill: #8fe07c; }
.white { fill: #fff; }
```
